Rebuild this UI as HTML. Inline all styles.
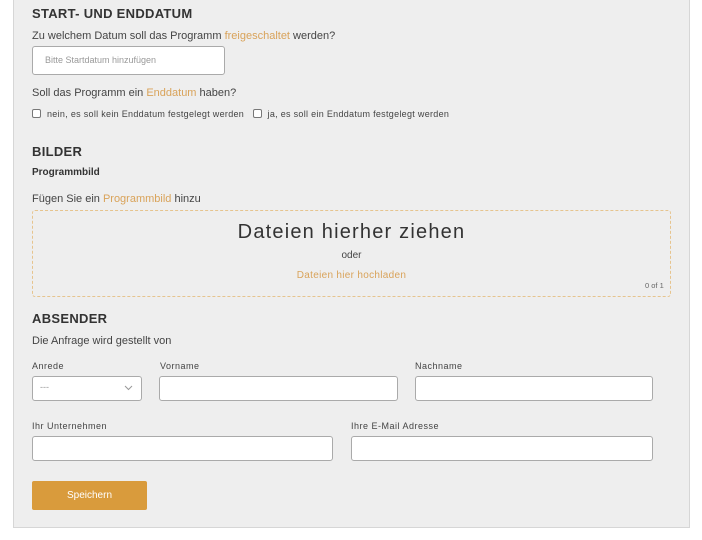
<!DOCTYPE html><html><head><meta charset="utf-8"><style>
body{margin:0;width:702px;height:540px;background:#fff;font-family:"Liberation Sans",sans-serif;color:#333;position:relative;overflow:hidden}
.p{position:absolute;left:13px;top:-2px;width:675px;height:528px;background:#eeeeee;border:1px solid #d6d6d6}
.a{position:absolute;white-space:nowrap}
h{position:absolute;font-weight:bold;font-size:13px;color:#333;letter-spacing:.3px}
.t{font-size:11px;color:#444}
.o{color:#d9a35a}
.in{position:absolute;background:#fff;border:1.5px solid #aaa;border-radius:3px;box-sizing:border-box}
.l{font-size:9px;color:#444;letter-spacing:.5px}
.cb{display:inline-block;width:7px;height:7px;border:1px solid #777;border-radius:2px;background:#fff;vertical-align:-1px;margin-right:6px}
</style></head><body>
<div class="p"></div>
<h style="left:32px;top:6px">START- UND ENDDATUM</h>
<div class="a t" style="left:32px;top:30px">Zu welchem Datum soll das Programm <span class="o">freigeschaltet</span> werden?</div>
<div class="in" style="left:32px;top:46px;width:193px;height:29px"><span class="a" style="left:12px;top:8px;font-size:9px;color:#999">Bitte Startdatum hinzufügen</span></div>
<div class="a t" style="left:32px;top:87px">Soll das Programm ein <span class="o">Enddatum</span> haben?</div>
<div class="a" style="left:32px;top:109px;font-size:9px;color:#444;letter-spacing:.3px"><span class="cb"></span>nein, es soll kein Enddatum festgelegt werden &nbsp; <span class="cb"></span>ja, es soll ein Enddatum festgelegt werden</div>
<h style="left:32px;top:144px">BILDER</h>
<div class="a" style="left:32px;top:167px;font-size:10px;font-weight:bold;color:#333">Programmbild</div>
<div class="a t" style="left:32px;top:193px">Fügen Sie ein <span class="o">Programmbild</span> hinzu</div>
<div class="a" style="left:32px;top:210px;width:637px;height:85px;border:1px dashed #e6c48e;border-radius:3px"></div>
<div class="a" style="left:32px;top:221px;width:639px;text-align:center;font-size:20px;color:#333;letter-spacing:1.2px">Dateien hierher ziehen</div>
<div class="a" style="left:32px;top:250px;width:639px;text-align:center;font-size:10px;color:#444">oder</div>
<div class="a o" style="left:32px;top:270px;width:639px;text-align:center;font-size:10px;letter-spacing:.3px">Dateien hier hochladen</div>
<div class="a" style="left:645px;top:281px;font-size:7.5px;color:#666">0 of 1</div>
<h style="left:32px;top:311px">ABSENDER</h>
<div class="a t" style="left:32px;top:335px">Die Anfrage wird gestellt von</div>
<div class="a l" style="left:32px;top:361px">Anrede</div>
<div class="a l" style="left:160px;top:361px">Vorname</div>
<div class="a l" style="left:415px;top:361px">Nachname</div>
<div class="in" style="left:32px;top:376px;width:110px;height:25px"><span class="a" style="left:7px;top:5px;font-size:9px;color:#999">---</span>
<svg class="a" style="left:91px;top:8px" width="9" height="6"><path d="M1 1L4.5 4.5L8 1" fill="none" stroke="#999" stroke-width="1"/></svg></div>
<div class="in" style="left:159px;top:376px;width:239px;height:25px"></div>
<div class="in" style="left:415px;top:376px;width:238px;height:25px"></div>
<div class="a l" style="left:32px;top:421px">Ihr Unternehmen</div>
<div class="a l" style="left:351px;top:421px">Ihre E-Mail Adresse</div>
<div class="in" style="left:32px;top:436px;width:301px;height:25px"></div>
<div class="in" style="left:351px;top:436px;width:302px;height:25px"></div>
<div class="a" style="left:32px;top:481px;width:115px;height:29px;background:#d99b3c;border-radius:2px;color:#fff;font-size:10px;text-align:center;line-height:29px">Speichern</div>
</body></html>
